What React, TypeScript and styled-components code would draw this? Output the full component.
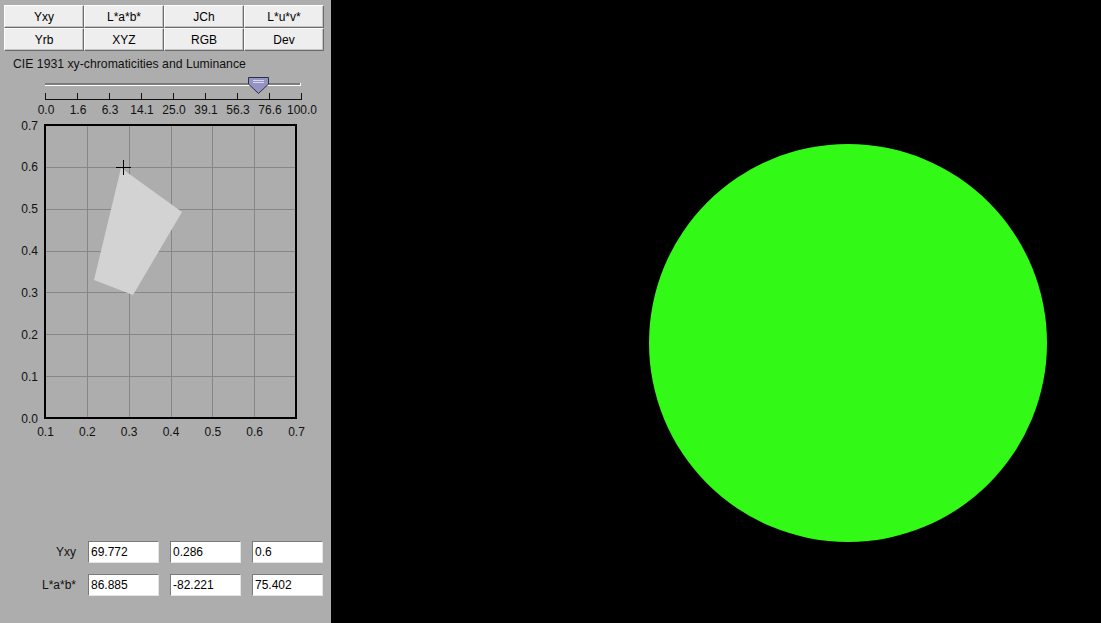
import React from 'react';
import styled, { createGlobalStyle } from 'styled-components';

const GlobalStyle = createGlobalStyle`
  html, body {
    margin: 0;
    padding: 0;
    background: #000;
  }
  body {
    font-family: "Liberation Sans", Arial, sans-serif;
    font-size: 12px;
  }
`;

const Page = styled.div`
  display: flex;
  width: 100vw;
  height: 100vh;
  overflow: hidden;
`;

const Panel = styled.div`
  width: 331px;
  flex-shrink: 0;
  background: #adadad;
  display: flex;
  flex-direction: column;
  padding: 5px 7px 27px 4px;
  box-sizing: border-box;
`;

const ButtonGrid = styled.div`
  display: grid;
  grid-template-columns: repeat(4, 80px);
  grid-auto-rows: 23px;
`;

const SpaceButton = styled.button`
  box-sizing: border-box;
  margin: 0;
  padding: 0;
  background: #eeeeee;
  border: 1px solid;
  border-color: #ffffff #6a6a6a #6a6a6a #ffffff;
  box-shadow: inset -1px -1px 0 #c4c4c4;
  font-family: "Liberation Sans", Arial, sans-serif;
  font-size: 12px;
  color: #000;
  cursor: pointer;
`;

const Title = styled.div`
  margin-top: 6px;
  padding-left: 9px;
  line-height: 14px;
  font-size: 12.25px;
  color: #111;
`;

const Slider = styled.div`
  position: relative;
  height: 46px;
  padding-left: 41px;
`;

const Track = styled.div`
  margin-top: 12px;
  width: 255px;
  height: 2px;
  background: #7c7c7c;
  border-bottom: 1px solid #fff;
  border-right: 1px solid #fff;
`;

const Thumb = styled.svg`
  position: absolute;
  left: 244px;
  top: 6px;
`;

const Ruler = styled.svg`
  display: block;
  margin-top: 7px;
  margin-left: -41px;
  overflow: visible;
`;

const Chart = styled.svg`
  display: block;
  overflow: visible;
`;

const Fields = styled.div`
  margin-top: auto;
  display: grid;
  grid-template-columns: 73px repeat(3, 71px);
  grid-auto-rows: 22px;
  column-gap: 11px;
  row-gap: 11px;
  align-items: center;
`;

const FieldLabel = styled.div`
  text-align: right;
  padding-right: 1px;
  color: #111;
`;

const Field = styled.input`
  box-sizing: border-box;
  width: 71px;
  height: 22px;
  margin: 0;
  padding: 0 2px;
  background: #fff;
  border: 1px solid;
  border-color: #7a7a7a #e4e4e4 #e4e4e4 #7a7a7a;
  font-family: "Liberation Sans", Arial, sans-serif;
  font-size: 12px;
  color: #000;
  outline: none;
`;

const Display = styled.div`
  flex: 1;
  background: #000;
  padding: 144px 0 0 318px;
`;

const Swatch = styled.div<{ $color: string }>`
  width: 398px;
  height: 398px;
  border-radius: 50%;
  background: ${(p) => p.$color};
`;

const spaces = ['Yxy', 'L*a*b*', 'JCh', 'L*u*v*', 'Yrb', 'XYZ', 'RGB', 'Dev'];
const scale = ['0.0', '1.6', '6.3', '14.1', '25.0', '39.1', '56.3', '76.6', '100.0'];

// plot area in page coordinates
const PL = 45, PR = 296, PT = 125, PB = 418;
const px = (v: number) => PL + ((v - 0.1) / 0.6) * (PR - PL);
const py = (v: number) => PB - (v / 0.7) * (PB - PT);

const xTicks = [0.1, 0.2, 0.3, 0.4, 0.5, 0.6, 0.7];
const yTicks = [0, 0.1, 0.2, 0.3, 0.4, 0.5, 0.6, 0.7];

const gamut = '121,168 182,212 133,295 94,280';

function XyChart({ x, y }: { x: number; y: number }) {
  const cx = Math.round(px(x)) + 0.5;
  const cy = Math.round(py(y)) + 0.5;
  return (
    <Chart width={327} height={323} viewBox="4 117 327 323">
      {xTicks.slice(1, -1).map((v) => (
        <line key={'gx' + v} x1={Math.round(px(v)) + 0.5} x2={Math.round(px(v)) + 0.5} y1={PT} y2={PB} stroke="#878787" />
      ))}
      {yTicks.slice(1, -1).map((v) => (
        <line key={'gy' + v} x1={PL} x2={PR} y1={Math.round(py(v)) + 0.5} y2={Math.round(py(v)) + 0.5} stroke="#878787" />
      ))}
      <polygon points={gamut} fill="#d3d3d3" />
      <rect x={PL} y={PT} width={PR - PL} height={PB - PT} fill="none" stroke="#000" strokeWidth={2} />
      <line x1={cx - 7.5} x2={cx + 7.5} y1={cy} y2={cy} stroke="#000" />
      <line x1={cx} x2={cx} y1={cy - 7.5} y2={cy + 7.5} stroke="#000" />
      {yTicks.map((v) => (
        <text key={'ly' + v} x={38} y={py(v) + 4.5} textAnchor="end" fontSize={12} fill="#111"
          fontFamily='"Liberation Sans", Arial, sans-serif'>
          {v.toFixed(1)}
        </text>
      ))}
      {xTicks.map((v) => (
        <text key={'lx' + v} x={px(v) + 0.5} y={435.5} textAnchor="middle" fontSize={12} fill="#111"
          fontFamily='"Liberation Sans", Arial, sans-serif'>
          {v.toFixed(1)}
        </text>
      ))}
    </Chart>
  );
}

export default function App() {
  return (
    <>
      <GlobalStyle />
      <Page>
        <Panel>
          <ButtonGrid>
            {spaces.map((s) => (
              <SpaceButton key={s}>{s}</SpaceButton>
            ))}
          </ButtonGrid>

          <Title>CIE 1931 xy-chromaticities and Luminance</Title>

          <Slider>
            <Track />
            <Thumb width={21} height={17} viewBox="0 0 21 17">
              <path d="M0.5 0.5 H20.5 V7 L10.5 16.5 L0.5 7 Z" fill="#9494c4" stroke="#2e2e3e" />
              <line x1={5} x2={16} y1={3.5} y2={3.5} stroke="#d8d8ee" />
              <line x1={5} x2={16} y1={5.5} y2={5.5} stroke="#d8d8ee" />
            </Thumb>
            <Ruler width={300} height={24} viewBox="4 93 300 24">
              <line x1={45} x2={301} y1={99.5} y2={99.5} stroke="#111" />
              {scale.map((t, i) => (
                <g key={t}>
                  <line x1={45.5 + i * 32} x2={45.5 + i * 32} y1={93} y2={100} stroke="#111" />
                  <text x={46 + i * 32} y={113.5} textAnchor="middle" fontSize={12} fill="#111"
                    fontFamily='"Liberation Sans", Arial, sans-serif'>
                    {t}
                  </text>
                </g>
              ))}
            </Ruler>
          </Slider>

          <XyChart x={0.286} y={0.6} />

          <Fields>
            <FieldLabel>Yxy</FieldLabel>
            <Field defaultValue="69.772" />
            <Field defaultValue="0.286" />
            <Field defaultValue="0.6" />
            <FieldLabel>L*a*b*</FieldLabel>
            <Field defaultValue="86.885" />
            <Field defaultValue="-82.221" />
            <Field defaultValue="75.402" />
          </Fields>
        </Panel>

        <Display>
          <Swatch $color="#33f916" />
        </Display>
      </Page>
    </>
  );
}
